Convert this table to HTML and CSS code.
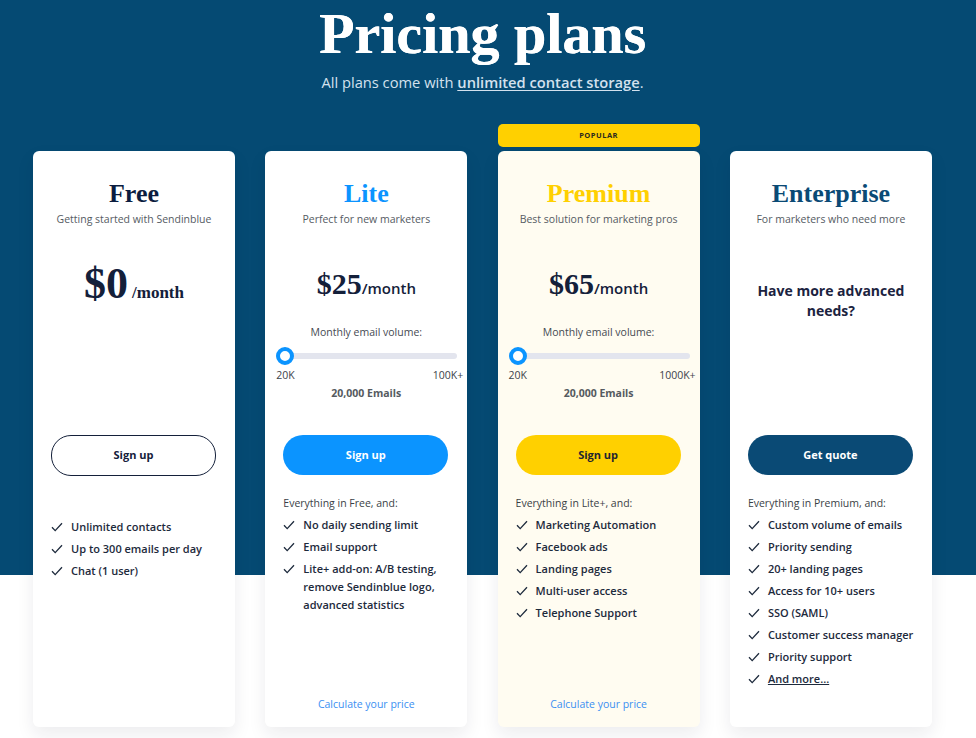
FILE: index.html
```html
<!DOCTYPE html>
<html lang="en">
<head>
<meta charset="utf-8">
<title>Pricing plans</title>
<link rel="stylesheet" href="styles.css">
</head>
<body>
<main class="wrap">
  <header class="hero">
    <h1 class="title">Pricing plans</h1>
    <p class="lead">All plans come with <a href="#" class="lead-link">unlimited contact storage</a>.</p>
  </header>

  <section class="plans">
    <!-- Free -->
    <article class="card">
      <h2 class="name name-free">Free</h2>
      <p class="tagline">Getting started with Sendinblue</p>
      <div class="mid">
        <div class="price price-big"><span class="amount">$0</span><span class="per-serif">/month</span></div>
      </div>
      <a href="#" class="btn btn-outline">Sign up</a>
      <ul class="features features-nohead">
        <li class="feat"><svg class="check" viewBox="0 0 12 10"><path d="M1 5.2 L4.2 8.6 L11 1.2"/></svg><span>Unlimited contacts</span></li>
        <li class="feat"><svg class="check" viewBox="0 0 12 10"><path d="M1 5.2 L4.2 8.6 L11 1.2"/></svg><span>Up to 300 emails per day</span></li>
        <li class="feat"><svg class="check" viewBox="0 0 12 10"><path d="M1 5.2 L4.2 8.6 L11 1.2"/></svg><span>Chat (1 user)</span></li>
      </ul>
    </article>

    <!-- Lite -->
    <article class="card">
      <h2 class="name name-lite">Lite</h2>
      <p class="tagline">Perfect for new marketers</p>
      <div class="mid">
        <div class="price price-small"><span class="amount">$25</span><span class="per-sans">/month</span></div>
        <div class="volume">
          <p class="vol-label">Monthly email volume:</p>
          <div class="slider"><span class="track"></span><span class="thumb"></span></div>
          <div class="range"><span>20K</span><span>100K+</span></div>
          <p class="vol-value">20,000 Emails</p>
        </div>
      </div>
      <a href="#" class="btn btn-blue">Sign up</a>
      <p class="feat-head">Everything in Free, and:</p>
      <ul class="features">
        <li class="feat"><svg class="check" viewBox="0 0 12 10"><path d="M1 5.2 L4.2 8.6 L11 1.2"/></svg><span>No daily sending limit</span></li>
        <li class="feat"><svg class="check" viewBox="0 0 12 10"><path d="M1 5.2 L4.2 8.6 L11 1.2"/></svg><span>Email support</span></li>
        <li class="feat"><svg class="check" viewBox="0 0 12 10"><path d="M1 5.2 L4.2 8.6 L11 1.2"/></svg><span>Lite+ add-on: A/B testing, remove Sendinblue logo, advanced statistics</span></li>
      </ul>
      <a href="#" class="calc">Calculate your price</a>
    </article>

    <!-- Premium -->
    <article class="card card-premium">
      <div class="badge">POPULAR</div>
      <h2 class="name name-premium">Premium</h2>
      <p class="tagline">Best solution for marketing pros</p>
      <div class="mid">
        <div class="price price-small"><span class="amount">$65</span><span class="per-sans">/month</span></div>
        <div class="volume">
          <p class="vol-label">Monthly email volume:</p>
          <div class="slider"><span class="track"></span><span class="thumb"></span></div>
          <div class="range"><span>20K</span><span>1000K+</span></div>
          <p class="vol-value">20,000 Emails</p>
        </div>
      </div>
      <a href="#" class="btn btn-yellow">Sign up</a>
      <p class="feat-head">Everything in Lite+, and:</p>
      <ul class="features">
        <li class="feat"><svg class="check" viewBox="0 0 12 10"><path d="M1 5.2 L4.2 8.6 L11 1.2"/></svg><span>Marketing Automation</span></li>
        <li class="feat"><svg class="check" viewBox="0 0 12 10"><path d="M1 5.2 L4.2 8.6 L11 1.2"/></svg><span>Facebook ads</span></li>
        <li class="feat"><svg class="check" viewBox="0 0 12 10"><path d="M1 5.2 L4.2 8.6 L11 1.2"/></svg><span>Landing pages</span></li>
        <li class="feat"><svg class="check" viewBox="0 0 12 10"><path d="M1 5.2 L4.2 8.6 L11 1.2"/></svg><span>Multi-user access</span></li>
        <li class="feat"><svg class="check" viewBox="0 0 12 10"><path d="M1 5.2 L4.2 8.6 L11 1.2"/></svg><span>Telephone Support</span></li>
      </ul>
      <a href="#" class="calc">Calculate your price</a>
    </article>

    <!-- Enterprise -->
    <article class="card">
      <h2 class="name name-ent">Enterprise</h2>
      <p class="tagline">For marketers who need more</p>
      <div class="mid">
        <p class="advanced">Have more advanced needs?</p>
      </div>
      <a href="#" class="btn btn-navy">Get quote</a>
      <p class="feat-head">Everything in Premium, and:</p>
      <ul class="features">
        <li class="feat"><svg class="check" viewBox="0 0 12 10"><path d="M1 5.2 L4.2 8.6 L11 1.2"/></svg><span>Custom volume of emails</span></li>
        <li class="feat"><svg class="check" viewBox="0 0 12 10"><path d="M1 5.2 L4.2 8.6 L11 1.2"/></svg><span>Priority sending</span></li>
        <li class="feat"><svg class="check" viewBox="0 0 12 10"><path d="M1 5.2 L4.2 8.6 L11 1.2"/></svg><span>20+ landing pages</span></li>
        <li class="feat"><svg class="check" viewBox="0 0 12 10"><path d="M1 5.2 L4.2 8.6 L11 1.2"/></svg><span>Access for 10+ users</span></li>
        <li class="feat"><svg class="check" viewBox="0 0 12 10"><path d="M1 5.2 L4.2 8.6 L11 1.2"/></svg><span>SSO (SAML)</span></li>
        <li class="feat"><svg class="check" viewBox="0 0 12 10"><path d="M1 5.2 L4.2 8.6 L11 1.2"/></svg><span>Customer success manager</span></li>
        <li class="feat"><svg class="check" viewBox="0 0 12 10"><path d="M1 5.2 L4.2 8.6 L11 1.2"/></svg><span>Priority support</span></li>
        <li class="feat"><svg class="check" viewBox="0 0 12 10"><path d="M1 5.2 L4.2 8.6 L11 1.2"/></svg><a href="#" class="more">And more...</a></li>
      </ul>
    </article>
  </section>
</main>
</body>
</html>
```
FILE: styles.css
```css
* { box-sizing: border-box; }

html, body {
  margin: 0;
  padding: 0;
}

body {
  font-family: "Open Sans", "Liberation Sans", sans-serif;
  background: linear-gradient(#054a73 0, #054a73 575px, #ffffff 575px);
  min-height: 738px;
  color: #1f2d3d;
}

.wrap {
  width: 899px;
  margin-left: 33px;
}

.hero {
  text-align: center;
  padding-top: 5px;
}

.title {
  margin: 0;
  font-family: "Liberation Serif", "Times New Roman", serif;
  font-weight: 700;
  font-size: 58px;
  line-height: 58px;
  color: #ffffff;
  text-shadow: 0.4px 0 0 #ffffff;
}

.lead {
  margin: 9px 0 0;
  font-size: 14.7px;
  line-height: 20px;
  color: #d3e1ee;
}

.lead-link {
  color: #d3e1ee;
  font-weight: 600;
  text-decoration: underline;
  text-underline-offset: 2px;
}

.plans {
  margin-top: 59px;
  display: grid;
  grid-template-columns: repeat(4, 202px);
  column-gap: 30.3px;
}

.card {
  position: relative;
  min-height: 576px;
  background: #ffffff;
  border-radius: 6px;
  padding: 28px 18px 16px;
  display: flex;
  flex-direction: column;
  box-shadow: 0 8px 18px rgba(20, 30, 50, 0.08);
}

.card-premium {
  background: #fffcf1;
}

.badge {
  position: absolute;
  left: 0;
  right: 0;
  bottom: calc(100% + 4px);
  height: 23px;
  border-radius: 5px;
  background: #ffd000;
  color: #2b2a1e;
  font-size: 7.5px;
  font-weight: 700;
  letter-spacing: 0.5px;
  line-height: 23px;
  text-align: center;
}

.name {
  margin: 0;
  text-align: center;
  font-family: "Liberation Serif", "Times New Roman", serif;
  font-weight: 700;
  font-size: 26px;
  line-height: 30px;
}

.name-free { color: #0b1d40; }
.name-lite { color: #0b94ff; }
.name-premium { color: #ffd000; }
.name-ent { color: #0a4a75; }

.tagline {
  margin: 3px 0 0;
  text-align: center;
  font-size: 10.5px;
  line-height: 14px;
  color: #555b63;
}

.mid {
  height: 209px;
  flex: none;
}

.price {
  margin-top: 33px;
  height: 50px;
  line-height: 50px;
  text-align: center;
  font-family: "Liberation Serif", "Times New Roman", serif;
  font-weight: 700;
  color: #14203a;
  white-space: nowrap;
}

.price-big { font-size: 44px; }
.price-small { font-size: 30px; }

.per-serif {
  font-size: 17px;
  margin-left: 4px;
}

.per-sans {
  font-family: "Open Sans", "Liberation Sans", sans-serif;
  font-size: 15px;
  font-weight: 600;
}

.volume {
  margin-top: 16px;
  text-align: center;
}

.vol-label {
  margin: 0;
  font-size: 10.5px;
  line-height: 14px;
  color: #454a52;
}

.slider {
  position: relative;
  margin: 8px -8px 0 -7px;
  height: 18px;
}

.track {
  position: absolute;
  left: 0;
  right: 0;
  top: 6px;
  height: 6px;
  border-radius: 3px;
  background: #e3e5ee;
}

.thumb {
  position: absolute;
  left: 0;
  top: 0;
  width: 18px;
  height: 18px;
  border-radius: 50%;
  background: #ffffff;
  border: 4px solid #0b94ff;
}

.range {
  margin: 3px -14px 0 -7px;
  display: flex;
  justify-content: space-between;
  font-size: 10.5px;
  line-height: 14px;
  color: #3c424a;
}

.vol-value {
  margin: 4px 0 0;
  font-size: 10.5px;
  line-height: 14px;
  font-weight: 700;
  color: #555a60;
}

.advanced {
  margin: 55px 0 0;
  text-align: center;
  font-size: 14px;
  line-height: 20px;
  font-weight: 700;
  color: #1b2340;
}

.btn {
  display: block;
  height: 40px;
  margin-right: 1px;
  border-radius: 20px;
  text-align: center;
  line-height: 40px;
  font-size: 11px;
  font-weight: 700;
  text-decoration: none;
  flex: none;
}

.btn-outline {
  border: 1px solid #14203a;
  line-height: 38px;
  height: 41px;
  color: #14203a;
  background: #ffffff;
}

.btn-blue { background: #0b94ff; color: #ffffff; }
.btn-yellow { background: #ffd000; color: #1f2530; }
.btn-navy { background: #0a4a75; color: #ffffff; }

.feat-head {
  margin: 21px 0 0;
  font-size: 10.5px;
  line-height: 14px;
  color: #3a3f46;
}

.features {
  list-style: none;
  margin: 6px -8px 0 0;
  padding: 0;
  display: flex;
  flex-direction: column;
  gap: 4px;
}

.features-nohead {
  margin-top: 42px;
}

.feat {
  display: grid;
  grid-template-columns: 20px 1fr;
  font-size: 11px;
  line-height: 18px;
  font-weight: 600;
  color: #1d2a3c;
}

.check {
  width: 12px;
  height: 10px;
  margin-top: 4px;
  fill: none;
  stroke: #1d2a3c;
  stroke-width: 1.3;
}

.more {
  color: #1d2a3c;
  text-decoration: underline;
}

.calc {
  margin-top: auto;
  text-align: center;
  font-size: 10.5px;
  line-height: 14px;
  color: #3b8ff2;
  text-decoration: none;
}
```
